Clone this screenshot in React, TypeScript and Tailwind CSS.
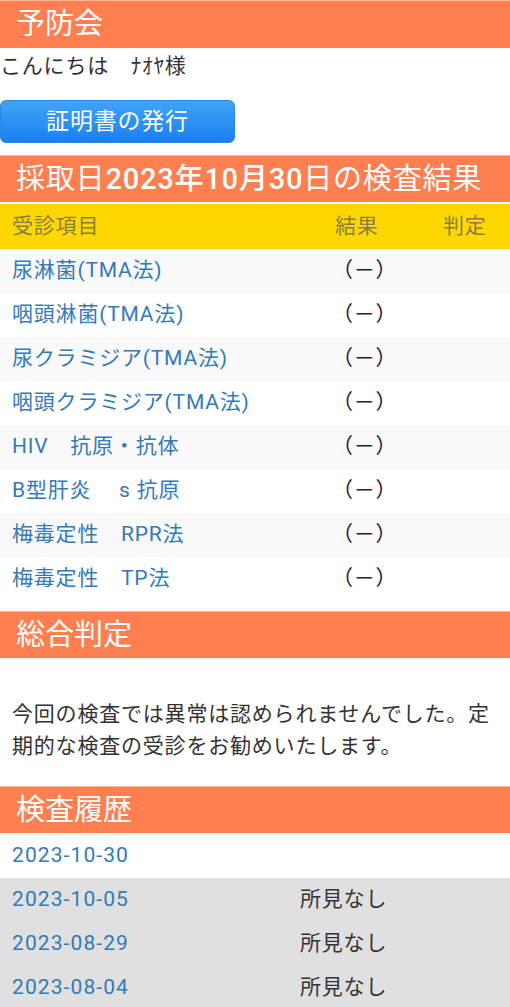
import React from 'react'

const FONT = "font-['Roboto','Noto_Sans_CJK_JP',sans-serif]"

const RESULTS = [
  '尿淋菌(TMA法)',
  '咽頭淋菌(TMA法)',
  '尿クラミジア(TMA法)',
  '咽頭クラミジア(TMA法)',
  'HIV　抗原・抗体',
  'B型肝炎　 s 抗原',
  '梅毒定性　RPR法',
  '梅毒定性　TP法',
]

const HISTORY = [
  { date: '2023-10-30', note: '' },
  { date: '2023-10-05', note: '所見なし' },
  { date: '2023-08-29', note: '所見なし' },
  { date: '2023-08-04', note: '所見なし' },
]

function SectionHeader({ children, className = '' }: { children: React.ReactNode; className?: string }) {
  return (
    <div
      className={`h-[47px] flex items-center px-4 bg-[#ff7f50] border-t border-[#fbb597] text-white text-[29px] leading-none ${className}`}
    >
      {children}
    </div>
  )
}

export default function App() {
  return (
    <div className={`w-[510px] min-h-[1007px] bg-white text-[#333] tracking-[0.8px] ${FONT}`}>
      {/* Header */}
      <SectionHeader className="h-[48px] tracking-normal">予防会</SectionHeader>

      <p className="text-[21px] leading-[32px] pt-[2px]">こんにちは　ﾅｵﾔ様</p>

      <div className="pt-[18px]">
        <button className="w-[235px] h-[43px] rounded-[6px] bg-gradient-to-b from-[#3fa4f6] to-[#1b7ef0] border border-[#2a86e6] text-white text-[23px] leading-none">
          証明書の発行
        </button>
      </div>

      {/* Results */}
      <SectionHeader className="mt-[12px] text-[28px]">
        <span>
          採取日<span className="font-medium">2023年10月30</span>日の検査結果
        </span>
      </SectionHeader>
      <div className="mt-[2px] h-[45px] bg-[#ffd700] flex items-center text-[21px] text-[#8a7c45]">
        <div className="flex-1 pl-3">受診項目</div>
        <div className="w-[108px]">結果</div>
        <div className="w-[67px]">判定</div>
      </div>
      <div>
        {RESULTS.map((name, i) => (
          <div
            key={name}
            className={`h-[44px] flex items-center text-[21px] ${i % 2 === 0 ? 'bg-[#f9f9f9]' : 'bg-white'}`}
          >
            <div className="flex-1 pl-3 text-[#337ab7]">{name}</div>
            <div className="w-[108px] -ml-[3px] text-[#222]">（－）</div>
            <div className="w-[70px]" />
          </div>
        ))}
      </div>

      {/* Summary */}
      <SectionHeader className="mt-[10px] tracking-normal">総合判定</SectionHeader>
      <p className="px-3 pt-[40px] pb-[24px] text-[21px] leading-[32px] text-[#333]">
        今回の検査では異常は認められませんでした。定期的な検査の受診をお勧めいたします。
      </p>

      {/* History */}
      <SectionHeader className="h-[46px] tracking-normal">検査履歴</SectionHeader>
      <div>
        {HISTORY.map((h, i) => (
          <div
            key={h.date}
            className={`h-[44px] flex items-center text-[21px] ${i === 0 ? 'bg-white h-[45px]' : 'bg-[#e0e0e0]'}`}
          >
            <div className="w-[300px] pl-3 text-[#337ab7] tracking-[1.1px]">{h.date}</div>
            <div className="text-[#333]">{h.note}</div>
          </div>
        ))}
      </div>
    </div>
  )
}
